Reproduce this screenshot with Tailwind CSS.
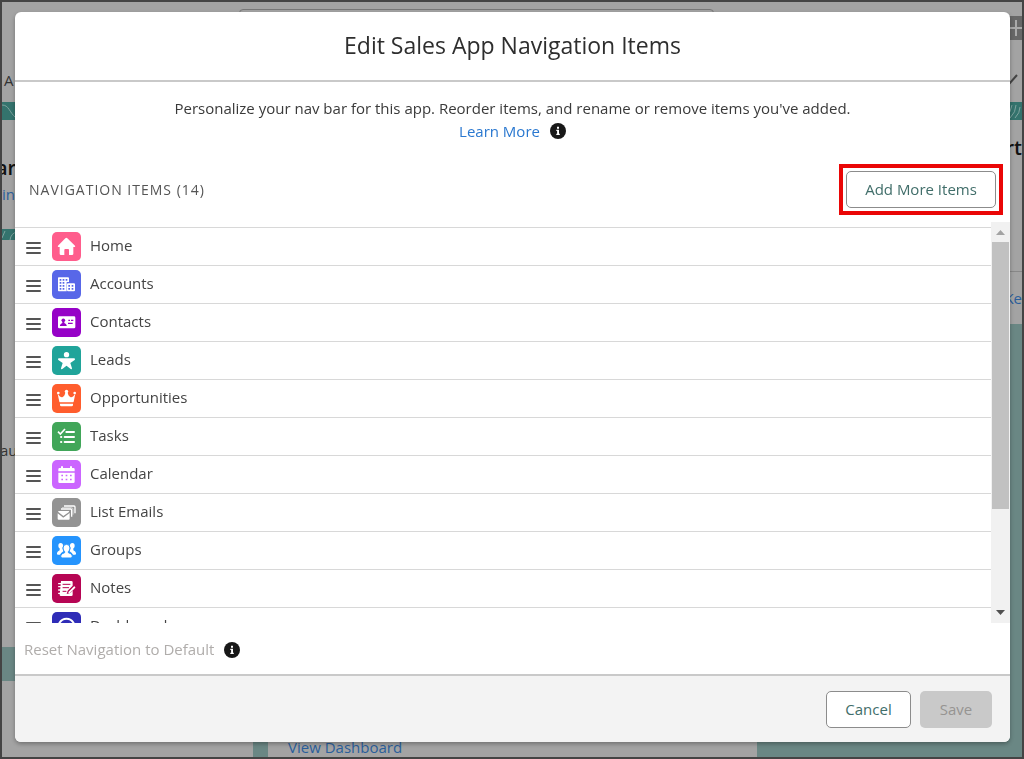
<!DOCTYPE html>
<html lang="en">
<head>
<meta charset="utf-8">
<meta name="viewport" content="width=device-width, initial-scale=1">
<title>Edit Sales App Navigation Items</title>
<script src="https://cdn.jsdelivr.net/npm/@tailwindcss/browser@4"></script>
</head>
<body class="h-screen overflow-hidden bg-[#444] font-['Open_Sans','Noto_Sans',sans-serif] text-[15px] leading-5 text-[#444]">

<!-- Dimmed application page -->
<div class="flex h-full flex-col overflow-hidden border-2 border-[#444] bg-[#6a8784]" aria-hidden="true">
  <div class="flex h-[100px] shrink-0 flex-col justify-between bg-[#a3a3a3]">
    <div class="flex items-start justify-between">
      <span class="mt-[7px] ml-[237px] h-8 w-[475px] rounded border border-[#777]"></span>
      <span class="mt-3.5 flex h-6 w-6 items-center justify-center bg-[#686868]">
        <svg class="ml-3 h-4 w-4 shrink-0" viewBox="0 0 16 16" stroke="#aaa" stroke-width="2"><path d="M8 0V16M0 8H16"/></svg>
      </span>
    </div>
    <div class="flex items-center justify-between px-0.5 pb-3">
      <span class="text-[#333]">A</span>
      <svg class="h-3 w-4" viewBox="0 0 16 12" fill="none" stroke="#444" stroke-width="2"><path d="M1 3l5 6L13 1"/></svg>
    </div>
  </div>
  <div class="flex h-[18px] shrink-0 justify-between bg-[#34736d]">
    <svg class="h-full w-4" viewBox="0 0 16 18" fill="none" stroke="#7fa39f"><path d="M0 3C7 3 7 10 14 16"/></svg>
    <svg class="h-full w-4" viewBox="0 0 16 18" fill="none" stroke="#7fa39f"><path d="M0 15Q5 10 6 3M4 16Q10 10 10 3M9 16Q14 11 14 5"/></svg>
  </div>
  <div class="flex min-h-0 flex-1 gap-[15px]">
    <div class="flex w-[251px] flex-col gap-[34px]">
      <div class="flex h-[527px] flex-col overflow-hidden bg-[#a3a3a3]">
        <div class="h-[109px] shrink-0 pt-9">
          <p class="-ml-1.5 text-xl leading-6 font-semibold text-[#111]">ar</p>
          <a href="#" class="mt-1 block leading-5 text-[#2b5f9b]" tabindex="-1">ing</a>
        </div>
        <svg class="h-[11px] w-4 shrink-0 bg-[#34736d]" viewBox="0 0 16 11" fill="none" stroke="#7fa39f"><path d="M8 11Q9 4 15 3M0 9L3 2"/></svg>
        <p class="-ml-0.5 pt-[200px] text-[#333]">au</p>
      </div>
      <div class="flex-1 bg-[#a3a3a3]"></div>
    </div>
    <div class="flex flex-1 flex-col justify-end bg-[#a3a3a3] px-5">
      <a href="#" class="text-[#2b5f9b]" tabindex="-1">View Dashboard</a>
    </div>
    <div class="flex h-[204px] w-[250px] flex-col items-end overflow-hidden bg-[#a3a3a3]">
      <p class="h-[151px] w-full pt-4 text-right text-xl leading-6 font-semibold text-[#111]">rt</p>
      <a href="#" class="w-full border-t border-[#888] pt-4 text-right text-[#2b5f9b]" tabindex="-1">Ke</a>
    </div>
  </div>
</div>

<!-- Modal -->
<div class="fixed inset-0 flex pt-3 pr-3.5 pb-[17px] pl-[15px]">
  <section role="dialog" aria-modal="true" aria-labelledby="dialog-title" class="flex min-h-0 flex-1 flex-col overflow-hidden rounded-md bg-white shadow-[0_2px_4px_rgba(0,0,0,0.3)]">
    <header class="flex h-[70px] shrink-0 items-center justify-center border-b-2 border-[#c9c9c9] pb-0.5">
      <h1 id="dialog-title" class="text-[23px] leading-7 text-[#2e2e2e]">Edit Sales App Navigation Items</h1>
    </header>

    <div class="flex shrink-0 flex-col items-center pt-3.5 text-center">
      <p class="leading-6 text-[#3a3a3a]">Personalize your nav bar for this app. Reorder items, and rename or remove items you've added.</p>
      <div class="flex h-[22px] items-center gap-2.5">
        <a href="#" class="text-[#2a78d0]">Learn More</a>
        <button type="button" aria-label="More information" class="flex">
          <svg class="h-4 w-4" viewBox="0 0 16 16"><circle cx="8" cy="8" r="8" fill="#181818"/><path fill="#fff" d="M7 3.8h2v2H7zM6.3 6.8H9v4h.8v1.2H6.3v-1.2h.8V8h-.8z"/></svg>
        </button>
      </div>
    </div>

    <div class="mt-[22px] flex shrink-0 items-center justify-between pr-[7px] pl-3.5">
      <h2 class="text-[14px] tracking-[1px] text-[#555]">NAVIGATION ITEMS (14)</h2>
      <div class="border-4 border-[#ea0606] p-[3px]">
        <button type="button" class="h-[37px] w-[150px] rounded-[5px] border border-[#8c8c8c] bg-white pb-0.5 text-[#416e6a]">Add More Items</button>
      </div>
    </div>

    <div class="mt-[7px] flex min-h-0 flex-1">
      <ul id="nav-items" class="mt-[5px] min-w-0 flex-1 overflow-hidden"></ul>
      <div class="flex w-[19px] shrink-0 flex-col items-center bg-[#f1f1f1]" aria-hidden="true">
        <svg class="h-5 w-full shrink-0" viewBox="0 0 19 20"><path fill="#a3a3a3" d="M5 13L9.500 8L14 13z"/></svg>
        <div class="h-[267px] w-[17px] bg-[#c1c1c1]"></div>
        <svg class="mt-auto h-5 w-full shrink-0" viewBox="0 0 19 20"><path fill="#505050" d="M5 7H14L9.500 12z"/></svg>
      </div>
    </div>

    <div class="flex h-[51px] shrink-0 items-center gap-2.5 px-[9px] pt-0.5">
      <button type="button" disabled class="pb-0.5 text-[#b0adab]">Reset Navigation to Default</button>
      <button type="button" aria-label="About resetting navigation" class="flex">
        <svg class="h-4 w-4" viewBox="0 0 16 16"><circle cx="8" cy="8" r="8" fill="#181818"/><path fill="#fff" d="M7 3.800h2v2H7zM6.300 6.800H9v4h.8v1.200H6.300v-1.200h.8V8h-.8z"/></svg>
      </button>
    </div>

    <footer class="flex h-[68px] shrink-0 items-center justify-end gap-[9px] border-t-2 border-[#c9c9c9] bg-[#f3f3f3] pr-[18px]">
      <button type="button" class="h-[37px] w-[85px] rounded-[5px] border border-[#8c8c8c] bg-white text-[#416e6a]">Cancel</button>
      <button type="button" disabled class="h-[37px] w-[72px] rounded-[5px] bg-[#c9c9c9] text-[#969492]">Save</button>
    </footer>
  </section>
</div>

<script>
const items = [
  { name: "Home", color: "#ff5d8c", icon: '<path fill="#fff" d="M43 17Q44.500 17 46 18.500L69 41Q71 44 68 45H64V65Q64 69 60 69H51V53Q51 51 48 51H40Q37 51 37 53V69H27Q23 69 23 65V45H19Q16 44 18 41L40 18.500Q41.500 17 43 17Z"/>' },
  { name: "Accounts", color: "#5867e8", icon: '<path fill="#fff" fill-rule="evenodd" d="M20 22H48Q51 22 51 25V36H44V64H20Q18 64 18 61V25Q18 22 20 22ZM23 27v5h5v-5zM32 27v5h5v-5zM41 27v5h5v-5zM23 36v5h5v-5zM32 36v5h5v-5zM23 45v5h5v-5zM32 45v5h5v-5zM23 54v5h5v-5zM32 54v5h5v-5zM48 40H66Q69 40 69 43V61Q69 64 66 64H48Q45 64 45 61V43Q45 40 48 40ZM49 45v5h5v-5zM59 45v5h5v-5zM49 54v5h5v-5zM59 54v5h5v-5z"/>' },
  { name: "Contacts", color: "#9602c7", icon: '<rect x="18" y="25" width="52" height="36" rx="4" fill="#fff"/><g fill="#9602c7"><circle cx="34" cy="37" r="5.500"/><path d="M31 39H37L37 45Q43 47 44 52V54H24V52Q25 47 31 45ZM49 35H54V39H49ZM57 35H64V39H57ZM48 44H62V48H48Z"/></g>' },
  { name: "Leads", color: "#20a49a", icon: '<g fill="#fff"><circle cx="43.500" cy="26" r="8"/><path d="M20 37H67Q71 39 68 42L55 51L60 67Q60 71 56 69L43.500 59L31 69Q27 71 27 67L32 51L19 42Q16 39 20 37Z"/></g>' },
  { name: "Opportunities", color: "#ff5d2d", icon: '<g fill="#fff"><circle cx="19" cy="27" r="4"/><circle cx="43.500" cy="22" r="5"/><circle cx="68" cy="27" r="4"/><path d="M17 29Q26 42 32 39Q39 36 40 24H47Q48 36 55 39Q61 42 70 29L65 53Q64 55 62 55H25Q23 55 22 53ZM24 59H63V63Q63 67 59 67H28Q24 67 24 63Z"/></g>' },
  { name: "Tasks", color: "#41a659", icon: '<g fill="none" stroke="#fff"><path stroke-width="5" d="M18 29L25 36L39 21"/><path stroke-width="6" stroke-linecap="round" d="M43 30H66M38 45H66M38 60H66"/><path stroke-width="6" stroke-linecap="round" d="M27 45H28M27 60H28"/></g>' },
  { name: "Calendar", color: "#cb65ff", icon: '<path fill="#fff" fill-rule="evenodd" d="M30 18Q33 18 33 21V24H54V21Q54 18 57 18Q60 18 60 21V24H64Q68 24 68 28V34H19V28Q19 24 23 24H27V21Q27 18 30 18ZM19 38H68V65Q68 69 64 69H23Q19 69 19 65ZM28 44v5h5v-5zM41 44v5h5v-5zM54 44v5h5v-5zM28 56v5h5v-5zM41 56v5h5v-5zM54 56v5h5v-5z"/>' },
  { name: "List Emails", color: "#939393", icon: '<g fill="#fff"><path d="M19 42L34 54L51 42Q53 40 50 39H20Q17 40 19 42ZM17 46L32 58Q34 59 36 58L53 45V62Q53 65 50 65H20Q17 65 17 62Z"/></g><g fill="none" stroke="#fff" stroke-width="4" stroke-linejoin="round"><path d="M27 33H56Q59 33 59 36V56"/><path d="M36 24H66Q69 24 69 27V46"/></g><path stroke="#fff" stroke-width="3" d="M30 29H58Q63 29 63 34V50" fill="none" opacity=".55"/>' },
  { name: "Groups", color: "#2594fd", icon: '<g fill="#fff"><ellipse cx="26" cy="29" rx="7" ry="8"/><path d="M23 34H31L34 46Q26 52 24 56H17Q14 55 15 51Q16 46 23 43Z"/><ellipse cx="61" cy="29" rx="7" ry="8"/><path d="M64 34H56L53 46Q61 52 63 56H70Q73 55 72 51Q71 46 64 43Z"/></g><g fill="#fff" stroke="#2594fd" stroke-width="3"><path d="M43.500 25Q54 25 54 36Q54 43 49 47V50Q61 53 61 60Q61 66 57 66H30Q26 66 26 60Q26 53 38 50V47Q33 43 33 36Q33 25 43.500 25Z"/></g>' },
  { name: "Notes", color: "#b60554", icon: '<path fill="#fff" d="M27 21H58Q62 21 62 25V35L47 50L44 60L55 57L62 50V62Q62 66 58 66H27Q23 66 23 62Z"/><g fill="none" stroke="#fff" stroke-width="4" stroke-linecap="round"><path d="M20 29H27M20 38H27M20 48H27M20 58H27"/></g><g stroke="#b60554" stroke-width="3" stroke-linecap="round"><path d="M33 31H54M33 41H50M33 52H42"/></g><path stroke="#fff" stroke-width="6" stroke-linecap="round" d="M52 55L67 40"/>' },
  { name: "Dashboards", color: "#2f2cb7", icon: '<path fill="none" stroke="#fff" stroke-width="6" d="M43.500 20A24 24 0 1 1 43.400 20Z"/><path stroke="#fff" stroke-width="5" d="M43 46L54 34"/>' }
];
document.getElementById("nav-items").innerHTML = items.map(({ name, color, icon }) => `
  <li class="flex h-[38px] items-center border-t border-[#d8d8d8] pl-[11px]">
    <svg class="mt-0.5 h-3.5 w-[15px] shrink-0" viewBox="0 0 15 14" role="img" aria-label="Drag to reorder" stroke="#555" stroke-width="2" stroke-linecap="round"><path d="M1 2H14M1 7H14M1 12H14"/></svg>
    <svg class="ml-[11px] h-[29px] w-[29px] shrink-0 rounded-[5px]" viewBox="0 0 87 87" aria-hidden="true"><rect width="87" height="87" fill="${color}"/>${icon}</svg>
    <span class="ml-[9px] pb-1">${name}</span>
  </li>`).join("");
</script>
</body>
</html>
